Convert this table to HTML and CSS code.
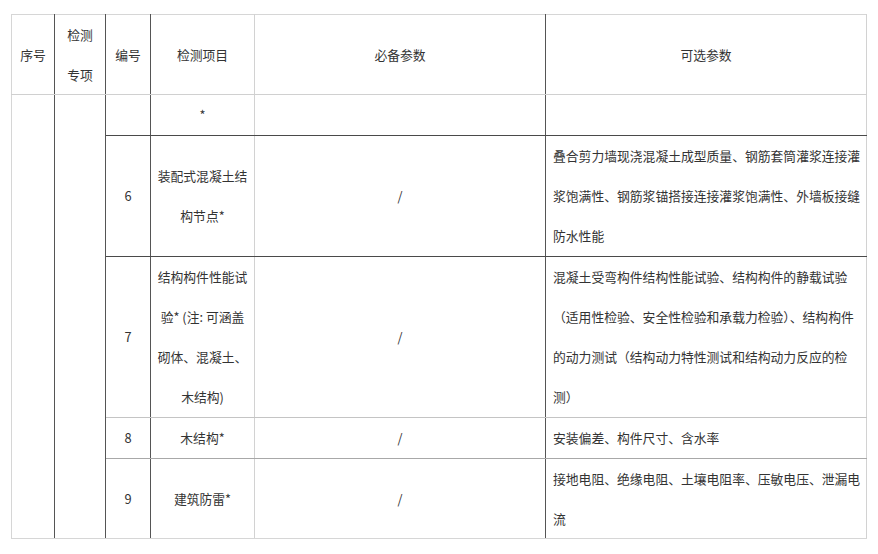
FILE: index.html
```html
<!DOCTYPE html>
<html lang="zh-CN">
<head>
<meta charset="utf-8">
<link rel="stylesheet" href="styles.css">
</head>
<body>
<table class="spec">
  <colgroup>
    <col class="c1"><col class="c2"><col class="c3"><col class="c4"><col class="c5"><col class="c6">
  </colgroup>
  <thead>
    <tr>
      <th class="b-l b-rd">序号</th>
      <th class="b-rd">检测<br>专项</th>
      <th class="b-rd">编号</th>
      <th class="b-rl">检测项目</th>
      <th class="b-rd">必备参数</th>
      <th class="b-rl">可选参数</th>
    </tr>
  </thead>
  <tbody>
    <tr class="row-star">
      <td class="b-l b-rd b-bot" rowspan="6"></td>
      <td class="b-rd b-bot" rowspan="6"></td>
      <td class="b-rd bd-dark"></td>
      <td class="b-rl bd-dark">*</td>
      <td class="b-rd bd-dark"></td>
      <td class="b-rl bd-dark"></td>
    </tr>
    <tr>
      <td class="b-rd bd-dark">6</td>
      <td class="b-rl bd-dark">装配式混凝土结构节点*</td>
      <td class="b-rd bd-dark">/</td>
      <td class="b-rl bd-dark opt">叠合剪力墙现浇混凝土成型质量、钢筋套筒灌浆连接灌浆饱满性、钢筋浆锚搭接连接灌浆饱满性、外墙板接缝防水性能</td>
    </tr>
    <tr>
      <td class="b-rd bd-light">7</td>
      <td class="b-rl bd-light">结构构件性能试验* (注: 可涵盖砌体、混凝土、木结构)</td>
      <td class="b-rd bd-light">/</td>
      <td class="b-rl bd-light opt">混凝土受弯构件结构性能试验、结构构件的静载试验（适用性检验、安全性检验和承载力检验）、结构构件的动力测试（结构动力特性测试和结构动力反应的检测）</td>
    </tr>
    <tr>
      <td class="b-rd bd-mid">8</td>
      <td class="b-rl bd-mid">木结构*</td>
      <td class="b-rd bd-mid">/</td>
      <td class="b-rl bd-mid opt">安装偏差、构件尺寸、含水率</td>
    </tr>
    <tr class="row-last">
      <td class="b-rd b-bot">9</td>
      <td class="b-rl b-bot">建筑防雷*</td>
      <td class="b-rd b-bot">/</td>
      <td class="b-rl b-bot opt">接地电阻、绝缘电阻、土壤电阻率、压敏电压、泄漏电流</td>
    </tr>
  </tbody>
</table>
</body>
</html>
```

FILE: styles.css
```css
html, body {
  margin: 0;
  padding: 0;
  background: #ffffff;
}

body {
  padding: 14px 0 0 11px;
  font-family: "Noto Sans CJK SC", "Noto Sans", sans-serif;
  font-size: 12.8px;
  color: #333333;
}

.spec {
  border-collapse: collapse;
  table-layout: fixed;
  width: 856px;
}

.c1 { width: 43px; }
.c2 { width: 51px; }
.c3 { width: 45px; }
.c4 { width: 104px; }
.c5 { width: 291px; }
.c6 { width: 321px; }

.spec th,
.spec td {
  line-height: 40px;
  padding: 0 6px;
  text-align: center;
  vertical-align: middle;
  font-weight: normal;
  border: 1px solid #d6d6d6;
  word-break: break-all;
}

.spec thead th {
  line-height: 39.5px;
  border-top: 1px solid #d6d6d6;
  border-bottom: 1px solid #d0d0d0;
}

.spec .row-last td {
  line-height: 39.5px;
}

.spec th:first-child,
.spec td.b-l {
  padding: 0 2px;
}

.b-l { border-left: 1px solid #d6d6d6 !important; }
.b-rd { border-right: 1px solid #555555 !important; }
.b-rl { border-right: 1px solid #d2d2d2 !important; }

.bd-dark { border-bottom: 1px solid #4a4a4a !important; }
.bd-light { border-bottom: 1px solid #c4c4c4 !important; }
.bd-mid { border-bottom: 1px solid #a8a8a8 !important; }
.b-bot { border-bottom: 1px solid #d6d6d6 !important; }

.spec td.opt {
  text-align: left;
  padding: 0 2px 0 7px;
}
```
